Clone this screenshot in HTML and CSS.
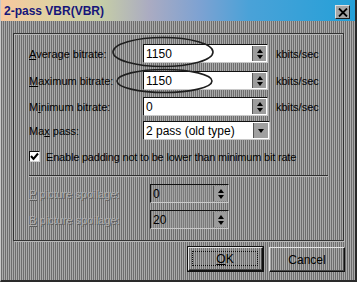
FILE: index.html
```html
<!DOCTYPE html>
<html>
<head>
<meta charset="utf-8">
<link rel="stylesheet" href="styles.css">
</head>
<body>
<div class="win">
  <div class="titlebar">
    <span class="title">2-pass VBR(VBR)</span>
    <span class="close"><svg width="10" height="9" viewBox="0 0 10 9"><path d="M1 0.5 L9 8.5 M9 0.5 L1 8.5" stroke="#000" stroke-width="1.8"/></svg></span>
  </div>
  <div class="body">
    <div class="group">
      <div class="row r1">
        <span class="label"><u>A</u>verage bitrate:</span>
        <span class="field"><span class="val">1150</span><span class="spin"><i class="up"></i><i class="dn"></i></span></span>
        <span class="unit">kbits/sec</span>
      </div>
      <div class="row r2">
        <span class="label"><u>M</u>aximum bitrate:</span>
        <span class="field"><span class="val">1150</span><span class="spin"><i class="up"></i><i class="dn"></i></span></span>
        <span class="unit">kbits/sec</span>
      </div>
      <div class="row r3">
        <span class="label">M<u>i</u>nimum bitrate:</span>
        <span class="field"><span class="val">0</span><span class="spin"><i class="up"></i><i class="dn"></i></span></span>
        <span class="unit">kbits/sec</span>
      </div>
      <div class="row r4">
        <span class="label">Ma<u>x</u> pass:</span>
        <span class="field select"><span class="val">2 pass (old type)</span><span class="drop"><i class="dn"></i></span></span>
      </div>
      <div class="check">
        <span class="box"><svg width="9" height="9" viewBox="0 0 9 9"><path d="M1 4 L3.5 7 L8 1.5" fill="none" stroke="#000" stroke-width="2"/></svg></span>
        <span class="ctext">Enable padding not to be lower than minimum bit rate</span>
      </div>
      <div class="sep"></div>
      <div class="row r5">
        <span class="label dis wide"><u>P</u> picture spoilage:</span>
        <span class="field small off"><span class="val">0</span><span class="spin"><i class="up"></i><i class="dn"></i></span></span>
      </div>
      <div class="row r6">
        <span class="label dis wide"><u>B</u> picture spoilage:</span>
        <span class="field small off"><span class="val">20</span><span class="spin"><i class="up"></i><i class="dn"></i></span></span>
      </div>
    </div>
    <div class="buttons">
      <span class="btn def"><span class="focus"><u>O</u>K</span></span>
      <span class="btn"><span class="nofocus">Cancel</span></span>
    </div>
  </div>
  <svg class="marks" width="357" height="282" viewBox="0 0 357 282">
    <ellipse cx="163" cy="52" rx="50" ry="14.5" fill="none" stroke="#1e1e1e" stroke-width="1.6"/>
    <ellipse cx="164.5" cy="81" rx="47.5" ry="11.5" fill="none" stroke="#1e1e1e" stroke-width="1.6"/>
  </svg>
</div>
</body>
</html>
```
FILE: styles.css
```css
* { box-sizing: border-box; }
html, body { margin: 0; padding: 0; }
body {
  width: 357px;
  height: 282px;
  overflow: hidden;
  font-family: "Liberation Sans", Arial, sans-serif;
  font-size: 11px;
  color: #000;
}
.win {
  position: relative;
  width: 357px;
  height: 282px;
  background: repeating-linear-gradient(90deg, #6e6e6e 0 1px, #aaaaaa 1px 2px);
  border-left: 1px solid #c8c8c8;
  border-right: 2px solid #2a2a2a;
  border-bottom: 2px solid #2a2a2a;
}
.titlebar {
  height: 21px;
  display: flex;
  align-items: center;
  padding: 0 5px 0 3px;
  background: linear-gradient(90deg, #f8c89e 0%, #e0d2a2 14%, #c6cea6 28%, #aaabc2 42%, #7ea2d2 56%, #4aa2d8 70%, #24a0d8 100%);
}
.title {
  font-weight: bold;
  font-size: 12px;
  color: #16167a;
}
.close {
  margin-left: auto;
  width: 15px;
  height: 14px;
  display: flex;
  align-items: center;
  justify-content: center;
  background: #a6a6a6;
  border-top: 1px solid #e0e0e0;
  border-left: 1px solid #e0e0e0;
  border-right: 1px solid #202020;
  border-bottom: 1px solid #202020;
  margin-top: 3px;
}
.body {
  padding: 12px 0 0 12px;
}
.group {
  width: 331px;
  height: 208px;
  border: 1px solid #343434;
  box-shadow: inset 1px 1px 0 #b8b8b8, 1px 1px 0 #b8b8b8;
  padding: 10px 0 0 15px;
}
.row {
  display: flex;
  align-items: center;
  height: 19px;
}
.r2 { margin-top: 8px; }
.r3 { margin-top: 7px; }
.r4 { margin-top: 5px; }
.label {
  width: 114px;
  flex: none;
}
.label.wide { width: 121px; }
.label.dis {
  color: #adadad;
  text-shadow: 1px 1px 0 #5c5c5c;
}
.field {
  width: 125px;
  height: 19px;
  display: flex;
  align-items: stretch;
  background: #fff;
  border-top: 1px solid #111;
  border-left: 1px solid #111;
  border-right: 1px solid #c8c8c8;
  border-bottom: 1px solid #c8c8c8;
  font-size: 12px;
}
.field.select { width: 127px; }
.field.small { width: 79px; }
.field.off { background: repeating-linear-gradient(90deg, #7a7a7a 0 1px, #a4a4a4 1px 2px); }
.val {
  flex: 1;
  padding-left: 2px;
  display: flex;
  align-items: center;
  white-space: nowrap;
  overflow: hidden;
}
.spin, .drop {
  width: 14px;
  flex: none;
  display: flex;
  flex-direction: column;
  align-items: center;
  justify-content: center;
  gap: 2px;
  background: #9c9c9c;
  border-left: 1px solid #555;
  margin: 1px 1px 1px 0;
}
.drop { width: 15px; background: #a0a0a0; }
.up, .dn {
  display: block;
  width: 0;
  height: 0;
  border-left: 3.5px solid transparent;
  border-right: 3.5px solid transparent;
}
.up { border-bottom: 4px solid #000; }
.dn { border-top: 4px solid #000; }
.unit { margin-left: 8px; }
.check {
  display: flex;
  align-items: center;
  margin-top: 10px;
  height: 13px;
  gap: 6px;
}
.ctext { letter-spacing: -0.2px; }
.box {
  width: 11px;
  height: 11px;
  background: #fff;
  border-top: 1px solid #111;
  border-left: 1px solid #111;
  border-right: 1px solid #d0d0d0;
  border-bottom: 1px solid #d0d0d0;
  display: flex;
  align-items: center;
  justify-content: center;
}
.sep {
  width: 299px;
  height: 2px;
  margin-top: 12px;
  border-top: 1px solid #303030;
  border-bottom: 1px solid #b8b8b8;
}
.r5 { margin-top: 7px; }
.r6 { margin-top: 7px; }
.buttons {
  display: flex;
  justify-content: flex-end;
  gap: 6px;
  width: 332px;
  margin-top: 6px;
}
.btn {
  width: 76px;
  height: 25px;
  display: flex;
  padding: 1px;
  border-top: 1px solid #e4e4e4;
  border-left: 1px solid #e4e4e4;
  border-right: 1px solid #111;
  border-bottom: 1px solid #111;
  box-shadow: inset -1px -1px 0 #4a4a4a;
}
.btn.def {
  width: 75px;
  height: 24px;
  outline: 1px solid #111;
  outline-offset: 0;
}
.focus, .nofocus {
  flex: 1;
  display: flex;
  align-items: center;
  justify-content: center;
  font-size: 12px;
}
.focus {
  margin: 2px 3px 3px 2px;
  border: 1px dotted #111;
}
.marks {
  position: absolute;
  left: -1px;
  top: 0;
  pointer-events: none;
}
```
